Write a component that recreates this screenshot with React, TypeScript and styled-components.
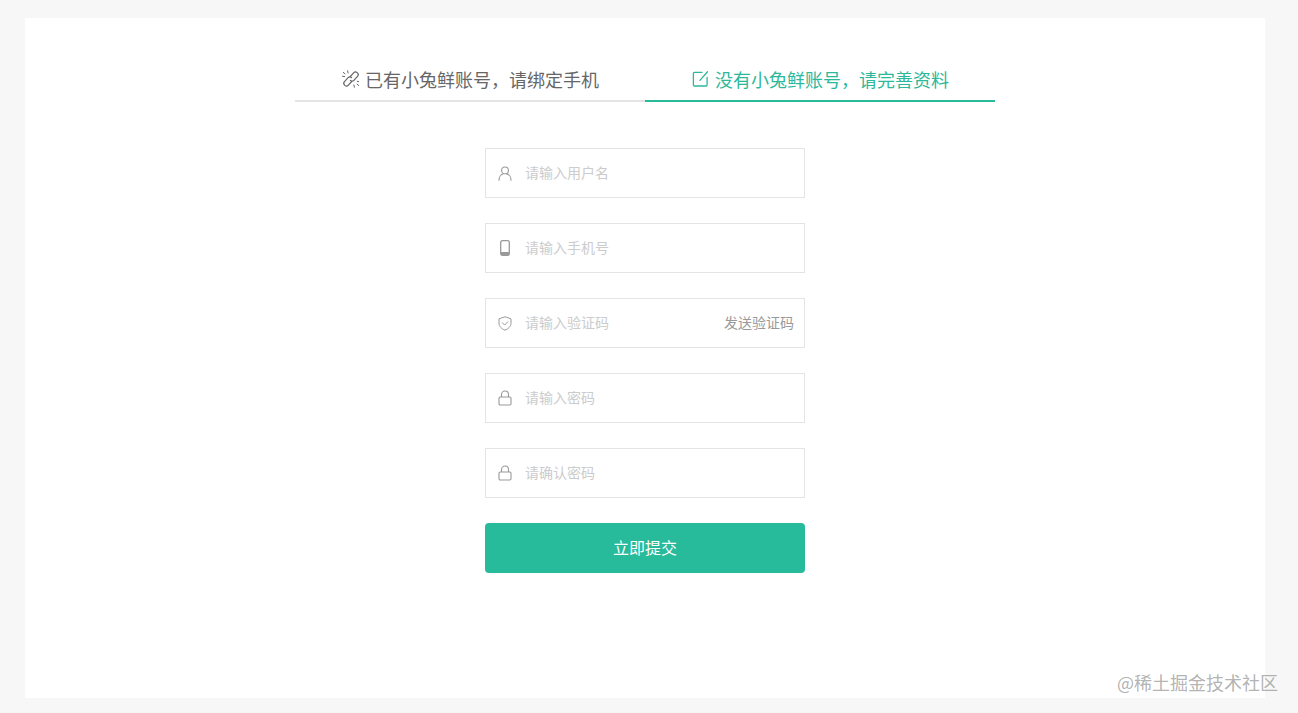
import styled, { createGlobalStyle } from "styled-components";
import { ReactNode } from "react";

const GlobalStyle = createGlobalStyle`
  * {
    box-sizing: border-box;
  }

  html,
  body {
    margin: 0;
    height: 100%;
    background: #f7f7f7;
    font-family: "Noto Sans CJK SC", "Liberation Sans", sans-serif;
  }
`;

const UnlinkIcon = () => (
  <svg width="18" height="18" viewBox="-1 0 18 18" fill="none" stroke="currentColor" strokeWidth="1.2" strokeLinecap="round">
    <path d="M8.300 6.500l3.300-3.700a2.500 2.500 0 0 1 3.500-.2l.3.300a2.500 2.500 0 0 1 .1 3.500l-3.600 3.900a2.500 2.500 0 0 1-3.500.1" />
    <path d="M9.700 11.500l-3.300 3.700a2.500 2.500 0 0 1-3.500.2l-.3-.3a2.500 2.500 0 0 1-.1-3.500l3.600-3.900a2.500 2.500 0 0 1 3.500-.1" />
    <path d="M5.600 .8l.5 2.200M1.300 2.400l1.700 1.500M.5 6.300l2.200.3" strokeWidth="1" />
    <path d="M12.400 17.200l-.5-2.200M16.700 15.600L15 14.100M17.500 11.700l-2.200-.3" strokeWidth="1" />
  </svg>
);

const EditIcon = () => (
  <svg width="18" height="18" viewBox="-0.500 0 18 18" fill="none" stroke="currentColor" strokeWidth="1.3" strokeLinecap="round">
    <path d="M10.500 2.300H2.900a1 1 0 0 0-1 1v11.700a1 1 0 0 0 1 1h11.700a1 1 0 0 0 1-1V7.500" />
    <path d="M16 1.800L8.400 10.400" />
  </svg>
);

const UserIcon = () => (
  <svg width="14" height="15" viewBox="0 0 14 15" fill="none" stroke="currentColor" strokeWidth="1.1" strokeLinecap="round">
    <circle cx="7" cy="4.400" r="3.400" />
    <path d="M1 14.300c0-3.400 2-6 4.200-6.400M13 14.300c0-3.400-2-6-4.200-6.400" />
  </svg>
);

const PhoneIcon = () => (
  <svg width="10" height="16" viewBox="0 0 10 16" fill="none">
    <rect x="0.700" y="0.700" width="8.600" height="14.600" rx="1.600" stroke="currentColor" strokeWidth="1.300" />
    <path d="M1 12h8v2a1.400 1.400 0 0 1-1.400 1.400H2.400A1.400 1.400 0 0 1 1 14z" fill="currentColor" />
  </svg>
);

const ShieldIcon = () => (
  <svg width="14" height="15" viewBox="0 0 14 15" fill="none" stroke="currentColor" strokeWidth="1">
    <path d="M7 .8l6 2v4.400c0 3.200-2.500 5.600-6 7-3.500-1.400-6-3.800-6-7V2.800z" />
    <path d="M4.400 6.800L6.600 9l3.200-3.200" strokeLinecap="round" />
  </svg>
);

const LockIcon = () => (
  <svg width="14" height="16" viewBox="0 0 14 16" fill="none" stroke="currentColor" strokeWidth="1.100">
    <rect x="1" y="7" width="12" height="8" rx="1.200" />
    <path d="M3.500 7V4.500a3.500 3.500 0 0 1 7 0V7" />
  </svg>
);

const fields: { icon: ReactNode; placeholder: string; type: string; action?: string }[] = [
  { icon: <UserIcon />, placeholder: "请输入用户名", type: "text" },
  { icon: <PhoneIcon />, placeholder: "请输入手机号", type: "text" },
  { icon: <ShieldIcon />, placeholder: "请输入验证码", type: "text", action: "发送验证码" },
  { icon: <LockIcon />, placeholder: "请输入密码", type: "password" },
  { icon: <LockIcon />, placeholder: "请确认密码", type: "password" },
];

const App = () => {
  return (
    <Page>
      <GlobalStyle />
      <Card>
        <Tabs>
          <Tab>
            <UnlinkIcon />
            已有小兔鲜账号，请绑定手机
          </Tab>
          <Tab $active>
            <EditIcon />
            没有小兔鲜账号，请完善资料
          </Tab>
        </Tabs>
        <Form>
          {fields.map((field) => (
            <Field key={field.placeholder}>
              <FieldIcon>{field.icon}</FieldIcon>
              <Input type={field.type} placeholder={field.placeholder} />
              {field.action && <CodeButton>{field.action}</CodeButton>}
            </Field>
          ))}
          <Submit type="button">立即提交</Submit>
        </Form>
      </Card>
      <Watermark>@稀土掘金技术社区</Watermark>
    </Page>
  );
};

export default App;

const Page = styled.div`
  position: relative;
  height: 713px;
  padding: 18px 33px 15px 25px;
  overflow: hidden;
`;

const Card = styled.div`
  height: 680px;
  padding-top: 47px;
  background: #fff;
`;

const Tabs = styled.div`
  display: flex;
  width: 700px;
  margin: 0 auto;
`;

const Tab = styled.div<{ $active?: boolean }>`
  flex: 1;
  display: flex;
  align-items: center;
  justify-content: center;
  gap: 6px;
  height: 37px;
  font-size: 18px;
  line-height: 30px;
  padding-bottom: 7px;
  color: ${(p) => (p.$active ? "#2cb89a" : "#666")};
  border-bottom: 2px solid ${(p) => (p.$active ? "#27ba9b" : "#e4e4e4")};
`;

const Form = styled.form`
  display: flex;
  flex-direction: column;
  gap: 25px;
  width: 320px;
  margin: 46px auto 0;
`;

const Field = styled.div`
  display: flex;
  align-items: center;
  height: 50px;
  border: 1px solid #e4e4e4;
`;

const FieldIcon = styled.span`
  display: flex;
  align-items: center;
  justify-content: center;
  flex: none;
  width: 37px;
  color: #999;
`;

const Input = styled.input`
  flex: 1;
  min-width: 0;
  height: 100%;
  padding: 0 0 2px 2px;
  border: none;
  outline: none;
  background: none;
  font-family: inherit;
  font-size: 14px;

  &::placeholder {
    color: #ccc;
    opacity: 1;
  }
`;

const CodeButton = styled.span`
  flex: none;
  padding: 0 10px 2px 0;
  font-size: 14px;
  color: #999;
`;

const Submit = styled.button`
  height: 50px;
  padding: 0 0 2px;
  border: none;
  border-radius: 4px;
  background: #27ba9b;
  color: #fff;
  font-family: inherit;
  font-size: 16px;
  cursor: pointer;
`;

const Watermark = styled.div`
  position: absolute;
  right: 20px;
  bottom: 19px;
  font-size: 18px;
  line-height: 24px;
  color: rgba(130, 130, 130, 0.62);
`;
